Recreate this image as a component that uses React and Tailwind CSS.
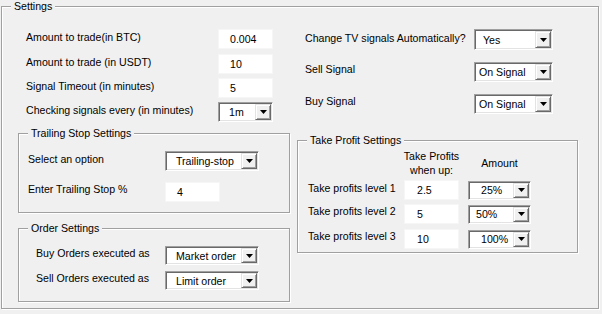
import React from "react";

const Arrow = () => (
  <svg width="7" height="4" viewBox="0 0 7 4" aria-hidden="true">
    <polygon points="0,0 7,0 3.5,4" fill="#000" />
  </svg>
);

const TextBox = ({ value, w = "w-[55px]", pad = "pl-[11px]" }) => (
  <div
    className={`flex h-[20px] shrink-0 items-center border border-[#f6f6f6] bg-white pt-[2px] ${w} ${pad}`}
  >
    {value}
  </div>
);

const Combo = ({ value, w, h = "h-[20px]", pad = "pl-[10px]" }) => (
  <div
    className={`flex shrink-0 border border-t-[#a0a0a0] border-l-[#a0a0a0] border-r-white border-b-white bg-white p-[1px] shadow-[inset_1px_1px_0_#696969,inset_-1px_-1px_0_#e3e3e3] ${w} ${h}`}
  >
    <span className={`flex flex-1 items-center whitespace-nowrap pt-[2px] ${pad}`}>
      {value}
    </span>
    <span className="flex w-[16px] items-center justify-center border border-t-[#e3e3e3] border-l-[#e3e3e3] border-r-[#696969] border-b-[#696969] bg-[#f0f0f0] shadow-[inset_1px_1px_0_#fff,inset_-1px_-1px_0_#a0a0a0]">
      <Arrow />
    </span>
  </div>
);

const Group = ({ title, className = "", children }) => (
  <fieldset
    className={`border border-[#a0a0a0] shadow-[inset_1px_1px_0_#fff,1px_1px_0_#fff] ${className}`}
  >
    <legend className="ml-[9px] bg-[#f0f0f0] px-[3px] leading-[13px]">{title}</legend>
    {children}
  </fieldset>
);

const Row = ({ label, labelClass, children, className = "" }) => (
  <div className={`flex items-center ${className}`}>
    <span className={`shrink-0 whitespace-nowrap ${labelClass}`}>{label}</span>
    {children}
  </div>
);

export default function App() {
  return (
    <div
      className="h-[314px] w-[602px] overflow-hidden bg-[#f0f0f0] text-[10.6px] text-black"
      style={{ fontFamily: '"Liberation Sans", Arial, sans-serif' }}
    >
      <Group title="Settings" className="ml-[1px] h-[309px] w-[598px]">
        <div className="flex pl-[16px]">
          {/* left column */}
          <div className="w-[272px] pt-[16px]">
            <Row label="Amount to trade(in BTC)" labelClass="w-[200px] pl-[8px] pb-[2px]">
              <TextBox value="0.004" />
            </Row>
            <Row className="mt-[5px]" label="Amount to trade (in USDT)" labelClass="w-[200px] pl-[8px] pb-[2px]">
              <TextBox value="10" />
            </Row>
            <Row className="mt-[4px]" label="Signal Timeout (in minutes)" labelClass="w-[200px] pl-[8px] pb-[2px]">
              <TextBox value="5" />
            </Row>
            <Row className="mt-[4px]" label="Checking signals every (in minutes)" labelClass="w-[200px] pl-[8px] pb-[2px]">
              <Combo value="1m" w="w-[55px]" pad="pl-[9px]" />
            </Row>

            <Group title="Trailing Stop Settings" className="mt-[5px] h-[86px] w-[272px]">
              <Row className="mt-[11px]" label="Select an option" labelClass="w-[146px] pl-[9px] pb-[2px]">
                <Combo value="Trailing-stop" w="w-[94px]" pad="pl-[9px]" />
              </Row>
              <Row className="mt-[11px]" label="Enter Trailing Stop %" labelClass="w-[146px] pl-[9px] pb-[4px]">
                <TextBox value="4" />
              </Row>
            </Group>

            <Group title="Order Settings" className="mt-[9px] h-[80px] w-[272px]">
              <Row className="mt-[11px]" label="Buy Orders executed as" labelClass="w-[146px] pl-[17px] pb-[4px]">
                <Combo value="Market order" w="w-[94px]" h="h-[19px]" pad="pl-[9px]" />
              </Row>
              <Row className="mt-[5px]" label="Sell Orders executed as" labelClass="w-[146px] pl-[17px] pb-[4px]">
                <Combo value="Limit order" w="w-[94px]" h="h-[19px]" pad="pl-[9px]" />
              </Row>
            </Group>
          </div>

          {/* right column */}
          <div className="ml-[7px] w-[281px] pt-[16px]">
            <Row label="Change TV signals Automatically?" labelClass="w-[177px] pl-[8px] pb-[2px]">
              <Combo value="Yes" w="w-[79px]" h="h-[21px]" pad="pl-[7px]" />
            </Row>
            <Row className="mt-[12px]" label="Sell Signal" labelClass="w-[177px] pl-[8px] pb-[4px]">
              <Combo value="On Signal" w="w-[79px]" pad="pl-[3px]" />
            </Row>
            <Row className="mt-[12px]" label="Buy Signal" labelClass="w-[177px] pl-[8px] pb-[4px]">
              <Combo value="On Signal" w="w-[79px]" pad="pl-[3px]" />
            </Row>

            <Group title="Take Profit Settings" className="mt-[20px] h-[119px] w-[281px]">
              <div className="mt-[2px] flex">
                <div className="w-[106px]" />
                <div className="flex w-[55px] flex-col items-center whitespace-nowrap leading-[14px]">
                  <span>Take Profits</span>
                  <span>when up:</span>
                </div>
                <div className="ml-[9px] w-[63px] self-center pt-[2px] text-center">Amount</div>
              </div>
              <Row className="mt-[3px]" label="Take profits level 1" labelClass="w-[106px] pl-[10px] pb-[2px]">
                <TextBox value="2.5" pad="pl-[12px]" />
                <div className="ml-[9px]">
                  <Combo value="25%" w="w-[63px]" h="h-[19px]" pad="pl-[11px]" />
                </div>
              </Row>
              <Row className="mt-[4px]" label="Take profits level 2" labelClass="w-[106px] pl-[10px] pb-[4px]">
                <TextBox value="5" pad="pl-[12px]" />
                <div className="ml-[9px]">
                  <Combo value="50%" w="w-[63px]" h="h-[19px]" pad="pl-[6px]" />
                </div>
              </Row>
              <Row className="mt-[5px]" label="Take profits level 3" labelClass="w-[106px] pl-[10px] pb-[4px]">
                <TextBox value="10" pad="pl-[12px]" />
                <div className="ml-[9px]">
                  <Combo value="100%" w="w-[63px]" h="h-[19px]" pad="pl-[11px]" />
                </div>
              </Row>
            </Group>
          </div>
        </div>
      </Group>
    </div>
  );
}
